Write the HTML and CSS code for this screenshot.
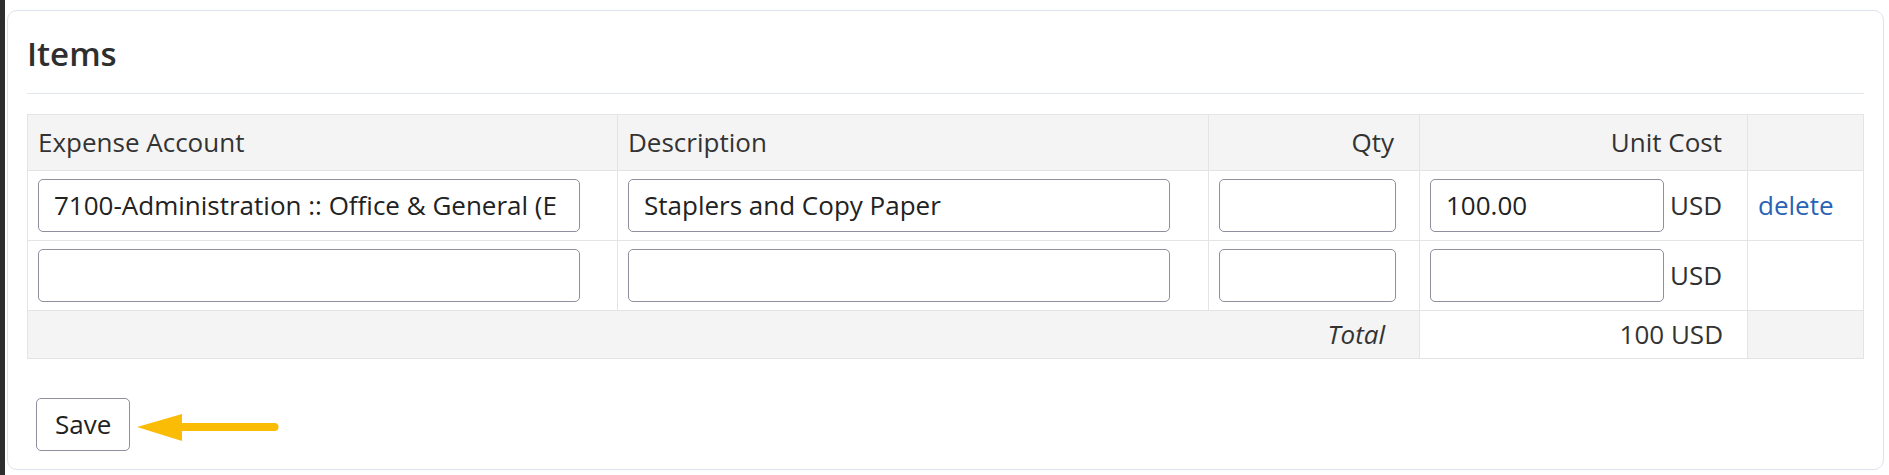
FILE: index.html
```html
<!DOCTYPE html>
<html lang="en">
<head>
<meta charset="utf-8">
<title>Items</title>
<link rel="stylesheet" href="styles.css">
</head>
<body>
<div class="card">
  <h2 class="card-title">Items</h2>
  <hr class="divider">
  <form class="items-form">
    <table class="items">
      <colgroup>
        <col class="c-account">
        <col class="c-desc">
        <col class="c-qty">
        <col class="c-cost">
        <col class="c-action">
      </colgroup>
      <thead>
        <tr>
          <th>Expense Account</th>
          <th>Description</th>
          <th class="num">Qty</th>
          <th class="num">Unit Cost</th>
          <th></th>
        </tr>
      </thead>
      <tbody>
        <tr>
          <td><input class="field field-wide" type="text" value="7100-Administration :: Office &amp; General (E"></td>
          <td><input class="field field-wide" type="text" value="Staplers and Copy Paper"></td>
          <td><input class="field field-qty" type="text" value=""></td>
          <td><div class="cost"><input class="field field-cost" type="text" value="100.00"><span class="currency">USD</span></div></td>
          <td><a class="delete" href="#">delete</a></td>
        </tr>
        <tr>
          <td><input class="field field-wide" type="text" value=""></td>
          <td><input class="field field-wide" type="text" value=""></td>
          <td><input class="field field-qty" type="text" value=""></td>
          <td><div class="cost"><input class="field field-cost" type="text" value=""><span class="currency">USD</span></div></td>
          <td></td>
        </tr>
      </tbody>
      <tfoot>
        <tr>
          <td class="total-label" colspan="3">Total</td>
          <td class="total-value">100 USD</td>
          <td class="total-end"></td>
        </tr>
      </tfoot>
    </table>
    <div class="actions">
      <button class="btn" type="button">Save</button>
      <svg class="arrow" viewBox="0 0 144 30" width="144" height="30" aria-hidden="true">
        <polygon points="0,15 45,2 45,29" fill="#fbbc05"/>
        <line x1="40" y1="15" x2="137.5" y2="15" stroke="#fbbc05" stroke-width="8" stroke-linecap="round"/>
      </svg>
    </div>
  </form>
</div>
</body>
</html>
```

FILE: styles.css
```css
* {
  box-sizing: border-box;
}

html {
  background: #ffffff;
}

body {
  margin: 0;
  min-height: 475px;
  background: #ffffff;
  border-left: 5px solid #2e2e2e;
  padding: 10px 5px 0 2px;
  font-family: "Open Sans", "Noto Sans", sans-serif;
  font-size: 26px;
  color: #333333;
}

.card {
  border: 1px solid #dde3ec;
  border-radius: 10px;
  padding: 23px 19px 18px;
  background: #ffffff;
}

.card-title {
  margin: 0;
  font-size: 33px;
  font-weight: 600;
  line-height: 1.2;
  color: #2f2f2f;
}

.divider {
  border: 0;
  border-top: 1px solid #e3e8ef;
  margin: 19px 0 20px;
}

.items-form {
  margin: 0;
}

.items {
  width: 100%;
  border-collapse: collapse;
  table-layout: fixed;
}

.c-account { width: 590px; }
.c-desc { width: 591px; }
.c-qty { width: 211px; }
.c-cost { width: 328px; }

.items th,
.items td {
  border: 1px solid #e4e4e4;
  padding: 8px 24px 8px 10px;
  text-align: left;
  vertical-align: middle;
  line-height: 31px;
  white-space: nowrap;
}

.items thead th {
  background: #f4f4f4;
  font-weight: 400;
  padding-top: 12px;
  padding-bottom: 12px;
  color: #333333;
}

.items th.num {
  text-align: right;
  padding-right: 25px;
}

.field {
  display: block;
  height: 53px;
  border: 1px solid #8f8f9d;
  border-radius: 5px;
  padding: 0 15px;
  font: inherit;
  color: #222222;
  background: #ffffff;
  outline: none;
}

.field-wide { width: 542px; }
.field-qty { width: 177px; }
.field-cost { width: 234px; }

.cost {
  display: flex;
  align-items: center;
  gap: 6px;
}

.currency {
  color: #2f2f2f;
}

.delete {
  color: #2a62b5;
  text-decoration: none;
}

.total-label {
  text-align: right !important;
  font-style: italic;
  background: #f4f4f4;
  padding-right: 34px !important;
}

.total-value {
  text-align: right !important;
  background: #ffffff;
}

.total-end {
  background: #f4f4f4;
}

.actions {
  display: flex;
  align-items: flex-start;
  margin-top: 39px;
  padding-left: 9px;
}

.btn {
  height: 53px;
  padding: 0 18px;
  border: 1px solid #8f8f9d;
  border-radius: 5px;
  background: #ffffff;
  font: inherit;
  color: #222222;
}

.arrow {
  display: block;
  margin: 14px 0 0 7px;
}
```
